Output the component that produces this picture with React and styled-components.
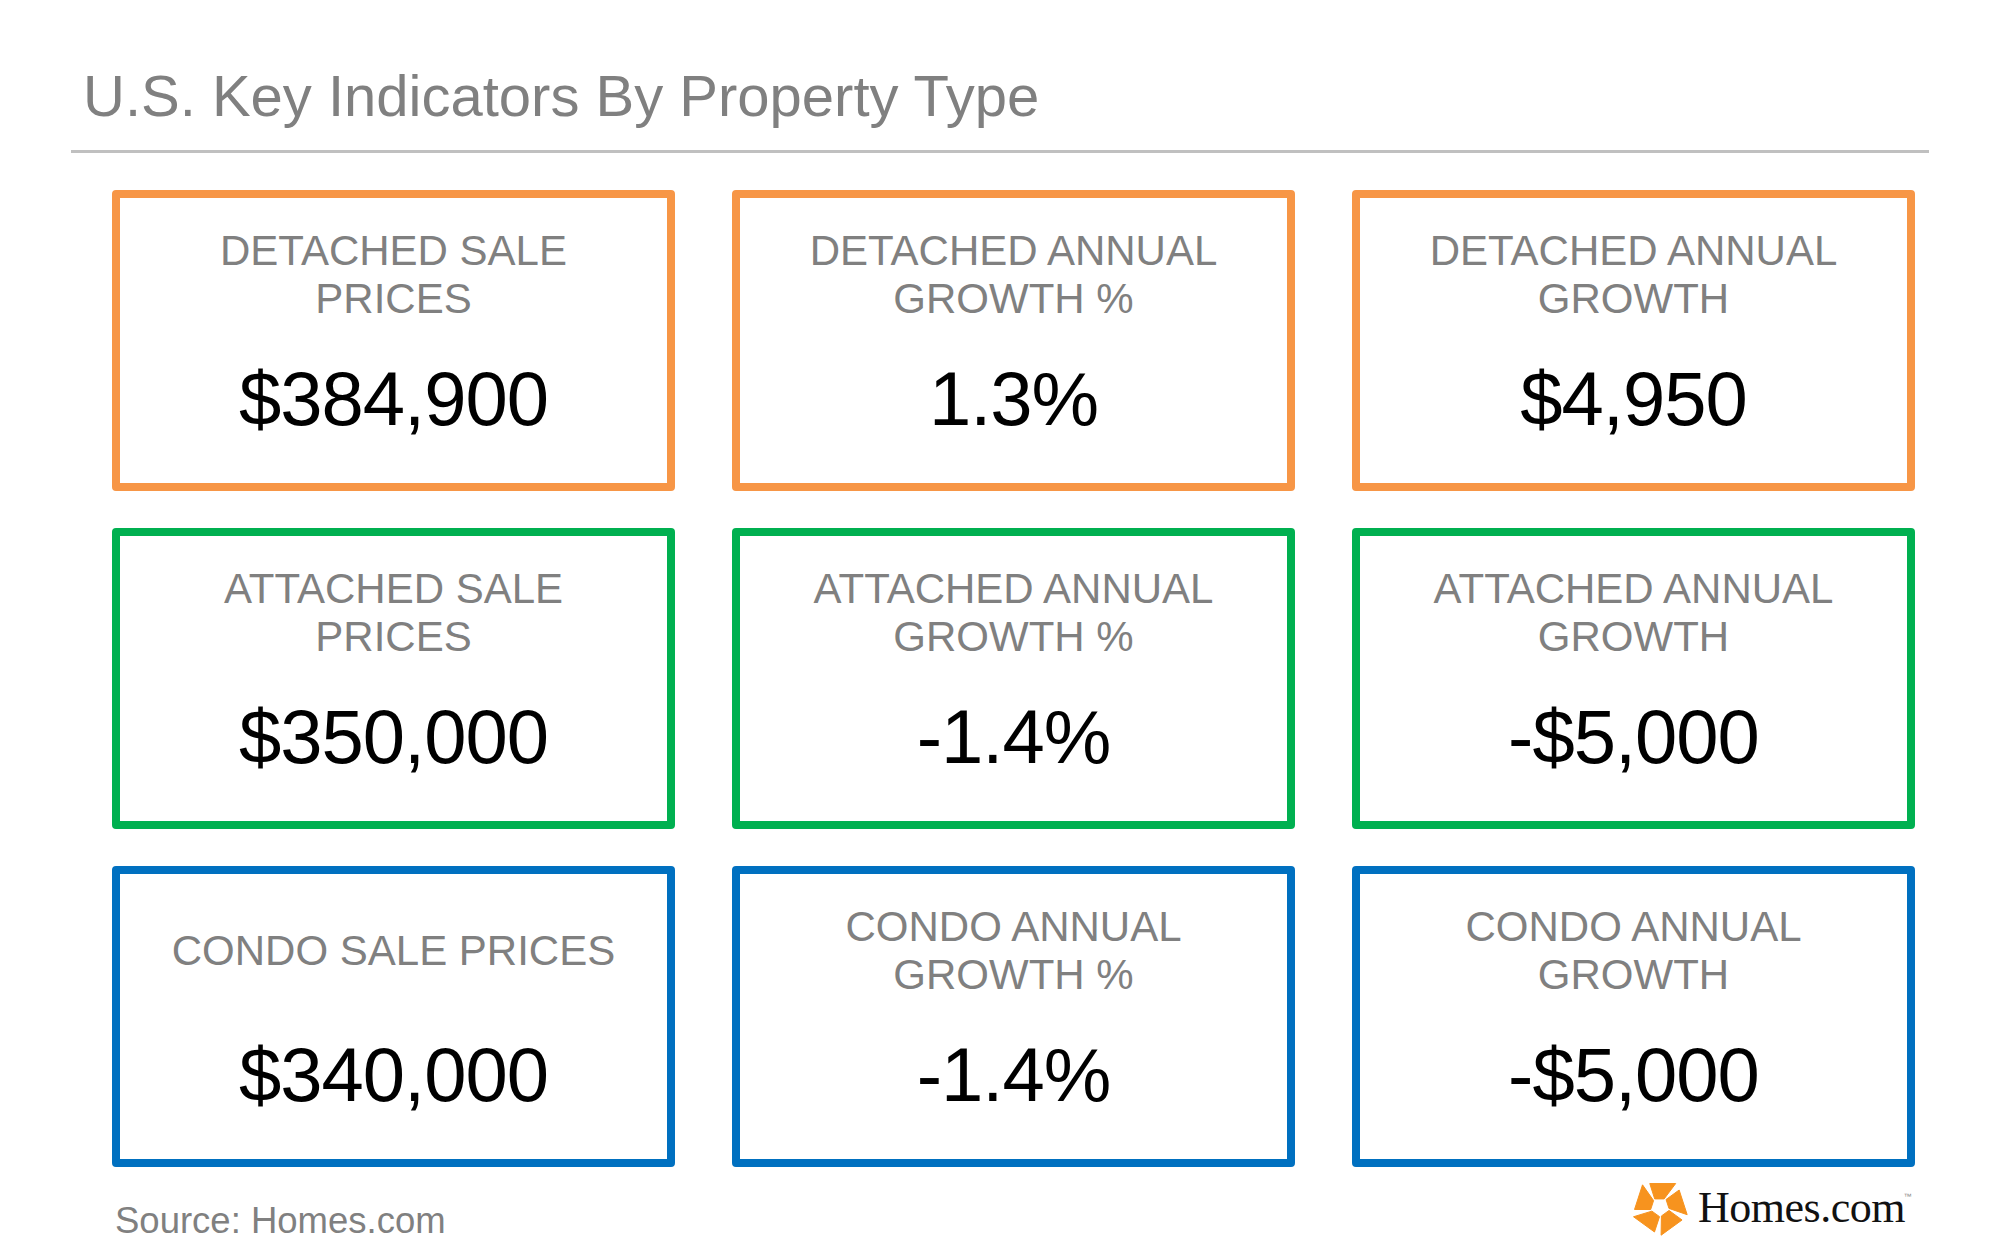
import React from 'react';
import styled, { createGlobalStyle } from 'styled-components';

const GlobalStyle = createGlobalStyle`
  * {
    box-sizing: border-box;
    margin: 0;
    padding: 0;
  }

  body {
    background: #ffffff;
    font-family: "Liberation Sans", Arial, sans-serif;
  }
`;

const colors = {
  orange: '#f79646',
  green: '#00b050',
  blue: '#0070c0',
};

const Page = styled.div`
  width: 2000px;
  height: 1253px;
  padding: 63px 71px 0 71px;
  display: flex;
  flex-direction: column;
`;

const Header = styled.header`
  border-bottom: 3px solid #c0c0c0;
  padding: 0 0 21px 12px;
`;

const Title = styled.h1`
  font-size: 58px;
  line-height: 66px;
  font-weight: 400;
  color: #808080;
`;

const Grid = styled.div`
  display: grid;
  grid-template-columns: repeat(3, 563px);
  grid-auto-rows: 301px;
  column-gap: 57px;
  row-gap: 37px;
  margin: 37px 0 0 41px;
`;

const Card = styled.div`
  border: 8px solid ${p => colors[p.$tone]};
  border-radius: 4px;
  padding-top: 29px;
  display: flex;
  flex-direction: column;
  align-items: center;
`;

const Label = styled.div`
  height: 96px;
  display: flex;
  flex-direction: column;
  justify-content: center;
  align-items: center;
  font-size: 42px;
  line-height: 48px;
  color: #808080;
  text-transform: uppercase;
  text-align: center;
`;

const Value = styled.div`
  margin-top: 32px;
  font-size: 76px;
  line-height: 88px;
  letter-spacing: -1px;
  color: #000000;
`;

const Footer = styled.footer`
  display: flex;
  justify-content: space-between;
  align-items: flex-start;
  margin: 11px 0 0 44px;
  padding-right: 24px;
`;

const Source = styled.div`
  padding-top: 22px;
  font-size: 36.5px;
  line-height: 42px;
  color: #808080;
`;

const Logo = styled.div`
  display: flex;
  align-items: center;
  gap: 9px;
  height: 58px;
`;

const LogoText = styled.span`
  font-family: "Liberation Serif", "Times New Roman", serif;
  font-size: 44px;
  letter-spacing: -0.5px;
  color: #111111;
  position: relative;

  sup {
    font-family: "Liberation Sans", Arial, sans-serif;
    font-size: 8px;
    color: #888888;
    position: absolute;
    top: 10px;
    right: -6px;
  }
`;

const cards = [
  { tone: 'orange', label: ['Detached Sale', 'Prices'], value: '$384,900' },
  { tone: 'orange', label: ['Detached Annual', 'Growth %'], value: '1.3%' },
  { tone: 'orange', label: ['Detached Annual', 'Growth'], value: '$4,950' },
  { tone: 'green', label: ['Attached Sale', 'Prices'], value: '$350,000' },
  { tone: 'green', label: ['Attached Annual', 'Growth %'], value: '-1.4%' },
  { tone: 'green', label: ['Attached Annual', 'Growth'], value: '-$5,000' },
  { tone: 'blue', label: ['Condo Sale Prices'], value: '$340,000' },
  { tone: 'blue', label: ['Condo Annual', 'Growth %'], value: '-1.4%' },
  { tone: 'blue', label: ['Condo Annual', 'Growth'], value: '-$5,000' },
];

// five skewed pieces along the edges of a flat-topped pentagon, star hole in the middle
const polar = (r, deg) => {
  const a = (deg * Math.PI) / 180;
  return [r * Math.cos(a), r * Math.sin(a)];
};
const lerp = (p, q, t) => [p[0] + (q[0] - p[0]) * t, p[1] + (q[1] - p[1]) * t];

const LogoMark = () => {
  const ks = [0, 1, 2, 3, 4];
  const outer = ks.map(k => polar(29, -126 + 72 * k));
  const inner = ks.map(k => polar(10, -126 + 72 * k));
  const pieces = ks.map(k => {
    const n = (k + 1) % 5;
    const pts = [
      lerp(outer[k], outer[n], 0.2),
      lerp(outer[k], outer[n], 0.96),
      lerp(inner[k], inner[n], 0.85),
      lerp(inner[k], inner[n], 0.05),
    ];
    return pts.map(p => p.map(v => v.toFixed(2)).join(',')).join(' ');
  });
  return (
    <svg width="58" height="58" viewBox="-29 -29 58 58">
      {pieces.map((pts, i) => (
        <polygon key={i} points={pts} fill="#f7931e" stroke="#f7931e" strokeWidth="1" strokeLinejoin="round" />
      ))}
    </svg>
  );
};

const App = () => {
  return (
    <>
      <GlobalStyle />
      <Page>
        <Header>
          <Title>U.S. Key Indicators By Property Type</Title>
        </Header>
        <Grid>
          {cards.map((c, i) => (
            <Card key={i} $tone={c.tone}>
              <Label>
                {c.label.map(line => (
                  <span key={line}>{line}</span>
                ))}
              </Label>
              <Value>{c.value}</Value>
            </Card>
          ))}
        </Grid>
        <Footer>
          <Source>Source: Homes.com</Source>
          <Logo>
            <LogoMark />
            <LogoText>
              Homes.com<sup>™</sup>
            </LogoText>
          </Logo>
        </Footer>
      </Page>
    </>
  );
};

export default App;
